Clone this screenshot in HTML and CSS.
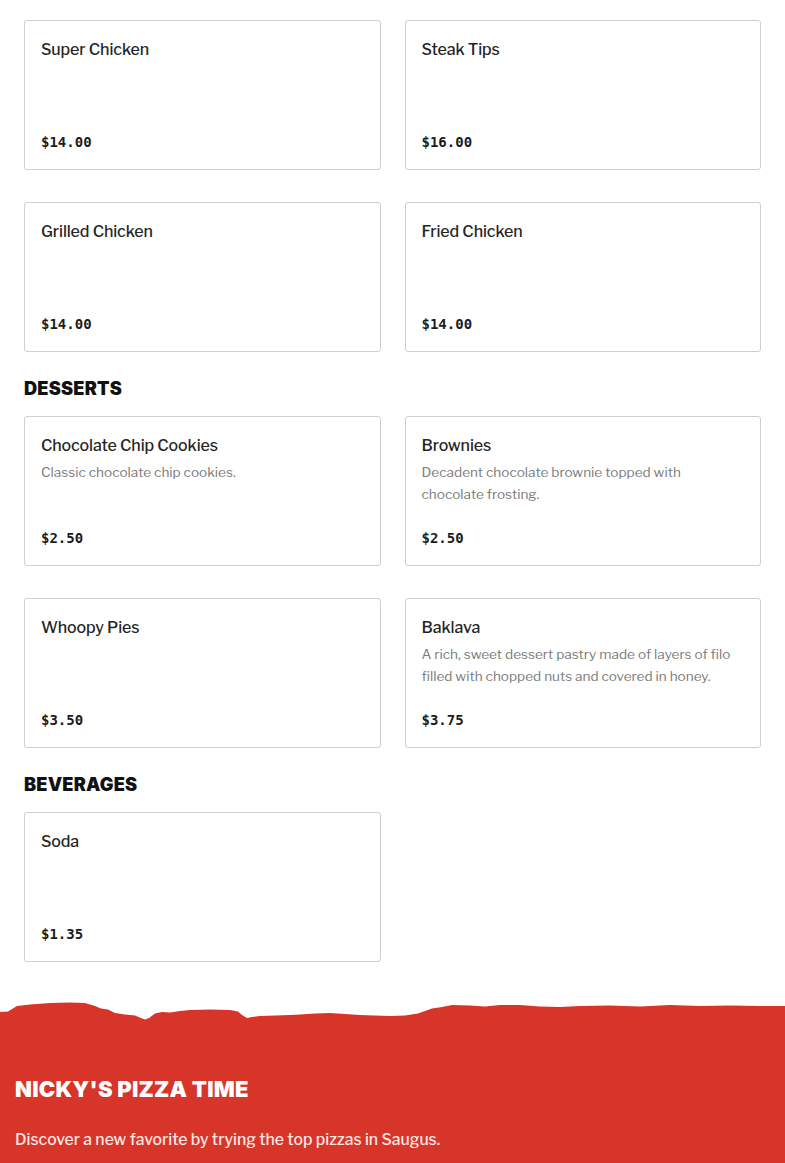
FILE: index.html
```html
<!DOCTYPE html>
<html>
<head>
<meta charset="utf-8">
<link rel="stylesheet" href="styles.css">
</head>
<body>
<main class="menu">
  <section class="group">
    <div class="grid">
      <div class="card"><h3 class="title">Super Chicken</h3><div class="price">$14.00</div></div>
      <div class="card"><h3 class="title">Steak Tips</h3><div class="price">$16.00</div></div>
      <div class="card"><h3 class="title">Grilled Chicken</h3><div class="price">$14.00</div></div>
      <div class="card"><h3 class="title">Fried Chicken</h3><div class="price">$14.00</div></div>
    </div>
  </section>
  <section class="group">
    <h2 class="section-title">DESSERTS</h2>
    <div class="grid">
      <div class="card"><h3 class="title">Chocolate Chip Cookies</h3><p class="desc">Classic chocolate chip cookies.</p><div class="price">$2.50</div></div>
      <div class="card"><h3 class="title">Brownies</h3><p class="desc">Decadent chocolate brownie topped with chocolate frosting.</p><div class="price">$2.50</div></div>
      <div class="card"><h3 class="title">Whoopy Pies</h3><div class="price">$3.50</div></div>
      <div class="card"><h3 class="title">Baklava</h3><p class="desc">A rich, sweet dessert pastry made of layers of filo filled with chopped nuts and covered in honey.</p><div class="price">$3.75</div></div>
    </div>
  </section>
  <section class="group">
    <h2 class="section-title">BEVERAGES</h2>
    <div class="grid">
      <div class="card"><h3 class="title">Soda</h3><div class="price">$1.35</div></div>
    </div>
  </section>
</main>
<footer class="footer">
  <svg class="torn" viewBox="0 0 785 22" preserveAspectRatio="none" xmlns="http://www.w3.org/2000/svg">
    <path fill="#d8352a" d="M0 12 L8 11.5 L17 6 L30 4.5 L50 3 L70 2.5 L85 3 L95 6 L101 8.5 L108 9.5 L115 13 L125 14.5 L135 15.5 L141 18 L145 19.5 L149 18 L155 13.5 L162 12 L170 12.5 L180 11 L190 10 L210 9.5 L230 10 L238 11.5 L242 15 L247 18 L252 17 L260 16 L275 15.5 L290 15 L300 14.5 L315 13.5 L330 13 L345 14 L360 15 L375 15.5 L390 16 L405 15.5 L418 13.5 L425 11 L432 8.5 L442 7 L452 5 L470 5.5 L485 6.5 L500 5 L520 5 L540 6.5 L560 7 L580 6 L610 5.5 L640 6.5 L670 5 L700 6 L730 5.5 L760 6 L785 6 L785 22 L0 22 Z"/>
  </svg>
  <div class="footer-body">
    <h2 class="brand">NICKY'S PIZZA TIME</h2>
    <p class="tagline">Discover a new favorite by trying the top pizzas in Saugus.</p>
  </div>
</footer>
</body>
</html>
```

FILE: styles.css
```css
* { box-sizing: border-box; }
html, body { margin: 0; padding: 0; background: #fff; }
body { font-family: "Libre Franklin", Inter, "Liberation Sans", sans-serif; color: #222; }

.menu { padding: 20px 24px 0; display: flex; flex-direction: column; gap: 28px; }
.group { display: flex; flex-direction: column; }
.section-title {
  margin: 0 0 20px;
  font-family: Inter, "Liberation Sans", sans-serif;
  font-weight: 900;
  font-size: 18.2px;
  line-height: 16px;
  letter-spacing: 0.2px;
  color: #111;
}
.grid { display: grid; grid-template-columns: 1fr 1fr; column-gap: 24px; row-gap: 32px; }
.card {
  border: 1px solid #cfcfcf;
  border-radius: 3px;
  min-height: 150px;
  padding: 17px 16px 17px;
  display: flex;
  flex-direction: column;
  background: #fff;
}
.title {
  margin: 0;
  font-size: 16px;
  line-height: 24px;
  font-weight: 550;
  color: #252525;
  letter-spacing: -0.1px;
}
.desc {
  margin: 3px 0 0;
  font-size: 13.6px;
  line-height: 22px;
  color: #7a7a7a;
}
.price {
  margin-top: auto;
  font-family: "DejaVu Sans Mono", "Liberation Mono", monospace;
  font-weight: bold;
  font-size: 14px;
  line-height: 20px;
  color: #1c1c1c;
}

.footer { margin-top: 38px; }
.torn { display: block; width: 100%; height: 22px; }
.footer-body { background: #d8352a; padding: 56px 15px 16px; margin-top: -1px; }
.brand {
  margin: 0;
  font-family: Inter, "Liberation Sans", sans-serif;
  font-weight: 900;
  font-size: 22px;
  line-height: 24px;
  color: #fff;
  letter-spacing: 0.2px;
}
.tagline {
  margin: 27px 0 0;
  font-size: 15.8px;
  line-height: 24px;
  font-weight: 500;
  color: #fbe9e6;
}
```
